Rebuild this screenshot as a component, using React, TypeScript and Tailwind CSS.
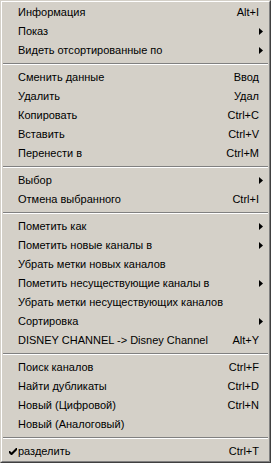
import React from 'react';

type Item =
  | { sep: true }
  | { label: string; shortcut?: string; sub?: boolean; checked?: boolean; sep?: false };

const items: Item[] = [
  { label: 'Информация', shortcut: 'Alt+I' },
  { label: 'Показ', sub: true },
  { label: 'Видеть отсортированные по', sub: true },
  { sep: true },
  { label: 'Сменить данные', shortcut: 'Ввод' },
  { label: 'Удалить', shortcut: 'Удал' },
  { label: 'Копировать', shortcut: 'Ctrl+C' },
  { label: 'Вставить', shortcut: 'Ctrl+V' },
  { label: 'Перенести в', shortcut: 'Ctrl+M' },
  { sep: true },
  { label: 'Выбор', sub: true },
  { label: 'Отмена выбранного', shortcut: 'Ctrl+I' },
  { sep: true },
  { label: 'Пометить как', sub: true },
  { label: 'Пометить новые каналы в', sub: true },
  { label: 'Убрать метки новых каналов' },
  { label: 'Пометить несуществующие каналы в', sub: true },
  { label: 'Убрать метки несуществующих каналов' },
  { label: 'Сортировка', sub: true },
  { label: 'DISNEY CHANNEL -> Disney Channel', shortcut: 'Alt+Y' },
  { sep: true },
  { label: 'Поиск каналов', shortcut: 'Ctrl+F' },
  { label: 'Найти дубликаты', shortcut: 'Ctrl+D' },
  { label: 'Новый (Цифровой)', shortcut: 'Ctrl+N' },
  { label: 'Новый (Аналоговый)' },
  { sep: true },
  { label: 'разделить', shortcut: 'Ctrl+T', checked: true },
];

function Arrow() {
  return (
    <svg width="4" height="7" viewBox="0 0 4 7" className="-mr-[4px]">
      <path d="M0 0 L4 3.5 L0 7 Z" fill="#000" />
    </svg>
  );
}

function Check() {
  return (
    <svg width="8" height="7" viewBox="0 0 8 7" className="absolute left-[6px] top-[6px]">
      <path d="M0 3 L0 5 L2 7 L3 7 L8 2 L8 0 L7 0 L2.5 4.5 L1 3 Z" fill="#000" />
    </svg>
  );
}

export default function App() {
  return (
    <div className="w-[271px] h-[463px] bg-[#d4d0c8] border border-t-[#d4d0c8] border-l-[#d4d0c8] border-r-[#404040] border-b-[#404040] font-['Liberation_Sans',Arial,sans-serif] text-[11px] text-black">
      <div className="h-full border border-t-white border-l-white border-r-[#808080] border-b-[#808080] p-[1px]">
        {items.map((it, i) =>
          it.sep ? (
            <div key={i} className="h-[8px] flex items-center">
              <div className="w-full border-t border-t-[#808080] border-b border-b-white" />
            </div>
          ) : (
            <div key={i} className="relative h-[19px] flex items-center pl-[15px] pr-[9px] leading-none">
              {it.checked && <Check />}
              <span className="whitespace-nowrap">{it.label}</span>
              <span className="flex-1" />
              {it.shortcut && <span className="whitespace-nowrap">{it.shortcut}</span>}
              {it.sub && <Arrow />}
            </div>
          )
        )}
      </div>
    </div>
  );
}
